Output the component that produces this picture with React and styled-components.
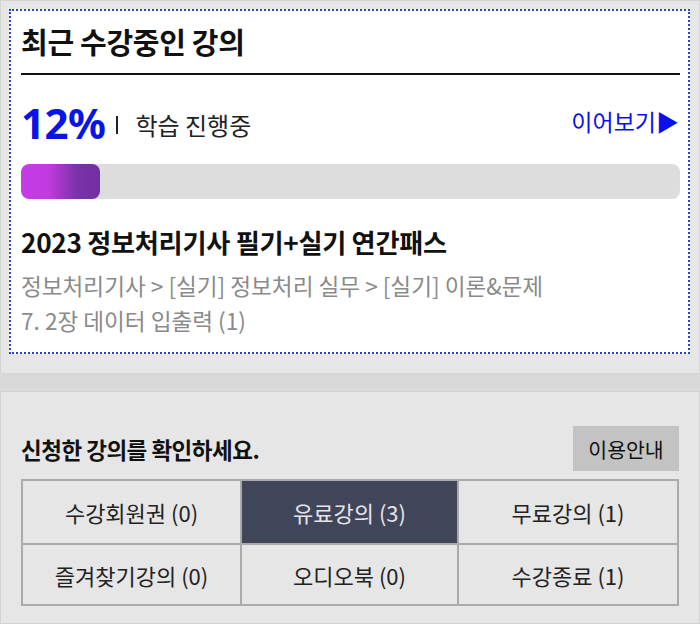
import React from "react";
import styled, { createGlobalStyle } from "styled-components";

const Global = createGlobalStyle`
  html, body { margin: 0; padding: 0; background: #e6e6e6; }
  body { font-family: "Noto Sans CJK KR", "Noto Sans", sans-serif; }
  * { box-sizing: border-box; }
`;

const Page = styled.div`
  width: 700px;
  display: flex;
  flex-direction: column;
`;

const TopSection = styled.section`
  border: 1px solid #d4d4d4;
  background: #e6e6e6;
  padding: 8px 9px 19px 8px;
`;

const Card = styled.div`
  background: #fff;
  border: 2px dotted #2a44c8;
  padding: 9px 8px 14px 10px;
  height: 345px;
  display: flex;
  flex-direction: column;
`;

const Title = styled.h2`
  margin: 0;
  font-size: 29px;
  font-weight: 700;
  color: #111;
  line-height: 42px;
  letter-spacing: -0.3px;
  padding-bottom: 11px;
  border-bottom: 2px solid #111;
`;

const StatusRow = styled.div`
  display: flex;
  align-items: center;
  margin-top: 24px;
  height: 50px;
`;

const Percent = styled.span`
  font-family: "Noto Sans", sans-serif;
  font-size: 42px;
  font-weight: 700;
  color: #0a14e6;
  letter-spacing: -0.5px;
  line-height: 1;
`;

const Divider = styled.span`
  width: 2px;
  height: 18px;
  background: #222;
  margin: 4px 17px 0 11px;
`;

const Status = styled.span`
  font-size: 24px;
  color: #222;
  margin-top: 2px;
`;

const Continue = styled.a`
  margin-left: auto;
  margin-top: -4px;
  font-size: 23px;
  color: #0a0ff0;
  text-decoration: none;
  margin-right: 1px;
  display: flex;
  align-items: center;
`;

const Track = styled.div`
  margin-top: 16px;
  height: 36px;
  border-radius: 8px;
  background: #dddddd;
  overflow: hidden;
`;

const Fill = styled.div`
  height: 100%;
  border-radius: 8px;
  background: linear-gradient(90deg, #c63ce6 0%, #c13ae0 35%, #7a33aa 70%, #70309f 100%);
`;

const CourseTitle = styled.h3`
  margin: 26px 0 0;
  font-size: 26.2px;
  font-weight: 700;
  color: #111;
  line-height: 34px;
  letter-spacing: -0.3px;
`;

const Path = styled.p`
  margin: 9px 0 0;
  font-size: 22.6px;
  line-height: 35px;
  color: #8a8a8a;
`;

const Band = styled.div`
  height: 17px;
  background: #d9d9d9;
`;

const BottomSection = styled.section`
  border: 1px solid #d2d2d2;
  background: #e6e6e6;
  padding: 34px 20px 16px 20px;
  height: 233px;
`;

const Header = styled.div`
  display: flex;
  align-items: center;
  justify-content: space-between;
  margin-bottom: 8px;
`;

const Heading = styled.h4`
  margin: 0;
  font-size: 22.5px;
  font-weight: 700;
  color: #111;
  letter-spacing: -0.5px;
`;

const GuideButton = styled.button`
  width: 106px;
  height: 45px;
  border: none;
  background: #c3c3c3;
  font-family: inherit;
  font-size: 20.5px;
  color: #111;
  padding: 0;
`;

const Grid = styled.div`
  display: grid;
  grid-template-columns: 217px 215px 218px;
  grid-template-rows: 62px 59px;
  border: 2px solid #ababab;
  background: #ababab;
  gap: 2px;
  width: 658px;
`;

const Cell = styled.div`
  display: flex;
  align-items: center;
  justify-content: center;
  font-size: 22px;
  color: ${(p) => (p.$active ? "#e4e4ea" : "#222")};
  background: ${(p) => (p.$active ? "#404559" : "#e6e6e6")};
`;

const tabs = [
  ["수강회원권 (0)", false],
  ["유료강의 (3)", true],
  ["무료강의 (1)", false],
  ["즐겨찾기강의 (0)", false],
  ["오디오북 (0)", false],
  ["수강종료 (1)", false],
];

export default function App() {
  const progress = 12;
  return (
    <Page>
      <Global />
      <TopSection>
        <Card>
          <Title>최근 수강중인 강의</Title>
          <StatusRow>
            <Percent>{progress}%</Percent>
            <Divider />
            <Status>학습 진행중</Status>
            <Continue href="#">이어보기▶</Continue>
          </StatusRow>
          <Track>
            <Fill style={{ width: `${progress}%` }} />
          </Track>
          <CourseTitle>2023 정보처리기사 필기+실기 연간패스</CourseTitle>
          <Path>
            정보처리기사 &gt; [실기] 정보처리 실무 &gt; [실기] 이론&amp;문제
            <br />
            7. 2장 데이터 입출력 (1)
          </Path>
        </Card>
      </TopSection>
      <Band />
      <BottomSection>
        <Header>
          <Heading>신청한 강의를 확인하세요.</Heading>
          <GuideButton>이용안내</GuideButton>
        </Header>
        <Grid>
          {tabs.map(([label, active]) => (
            <Cell key={label} $active={active}>
              {label}
            </Cell>
          ))}
        </Grid>
      </BottomSection>
    </Page>
  );
}
